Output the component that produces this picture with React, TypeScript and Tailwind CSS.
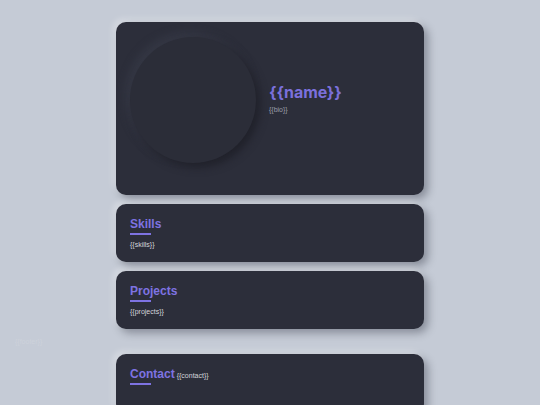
import React from 'react';

const cardCls =
  'w-[308px] rounded-[10px] bg-[#2c2e3a] shadow-[4px_4px_8px_rgba(20,24,36,0.35),-3px_-3px_6px_rgba(255,255,255,0.35)]';

const Section: React.FC<{ title: string; body: string }> = ({ title, body }) => (
  <div className={`${cardCls} px-[14px] pt-[12px] pb-[12px]`}>
    <h2 className="text-[12px] leading-[16px] font-bold text-[#7e73e2]">{title}</h2>
    <div className="mt-[1px] h-[2px] w-[21px] bg-[#7e73e2]" />
    <p className="mt-[5px] text-[7px] leading-[10px] text-[#d4d6dc]">{body}</p>
  </div>
);

export default function App() {
  return (
    <div className="min-h-[405px] bg-[#c5cbd6] pt-[22px] font-['Liberation_Sans',Arial,sans-serif]">
      <div className="flex flex-col items-center gap-[9px]">
        <div className={`${cardCls} flex items-center gap-[13px] pl-[14px] pt-[15px] pb-[32px]`}>
          <div className="h-[126px] w-[126px] shrink-0 rounded-full bg-[#2b2d38] shadow-[4px_4px_9px_#20212a,-4px_-4px_9px_#363946]" />
          <div className="flex flex-col pb-[4px]">
            <h1 className="text-[16px] leading-[20px] font-bold tracking-[-0.1px] text-[#7b70dc] font-['Inter',sans-serif]">
              {'{{name}}'}
            </h1>
            <p className="mt-[3px] text-[7px] leading-[10px] text-[#9b9eaa]">{'{{bio}}'}</p>
          </div>
        </div>
        <Section title="Skills" body="{{skills}}" />
        <Section title="Projects" body="{{projects}}" />
      </div>
      <div className="h-[25px] flex items-center px-[15px]">
        <span className="text-[7px] leading-[10px] text-[#cdd2db]">{'{{footer}}'}</span>
      </div>
      <div className="flex justify-center">
        <div className={`${cardCls} px-[14px] pt-[12px] h-[60px]`}>
          <div className="flex items-baseline gap-[2px]">
            <h2 className="text-[12px] leading-[16px] font-bold text-[#7e73e2]">Contact</h2>
            <span className="text-[7px] leading-[10px] text-[#d4d6dc]">{'{{contact}}'}</span>
          </div>
          <div className="mt-[1px] h-[2px] w-[21px] bg-[#7e73e2]" />
        </div>
      </div>
    </div>
  );
}
